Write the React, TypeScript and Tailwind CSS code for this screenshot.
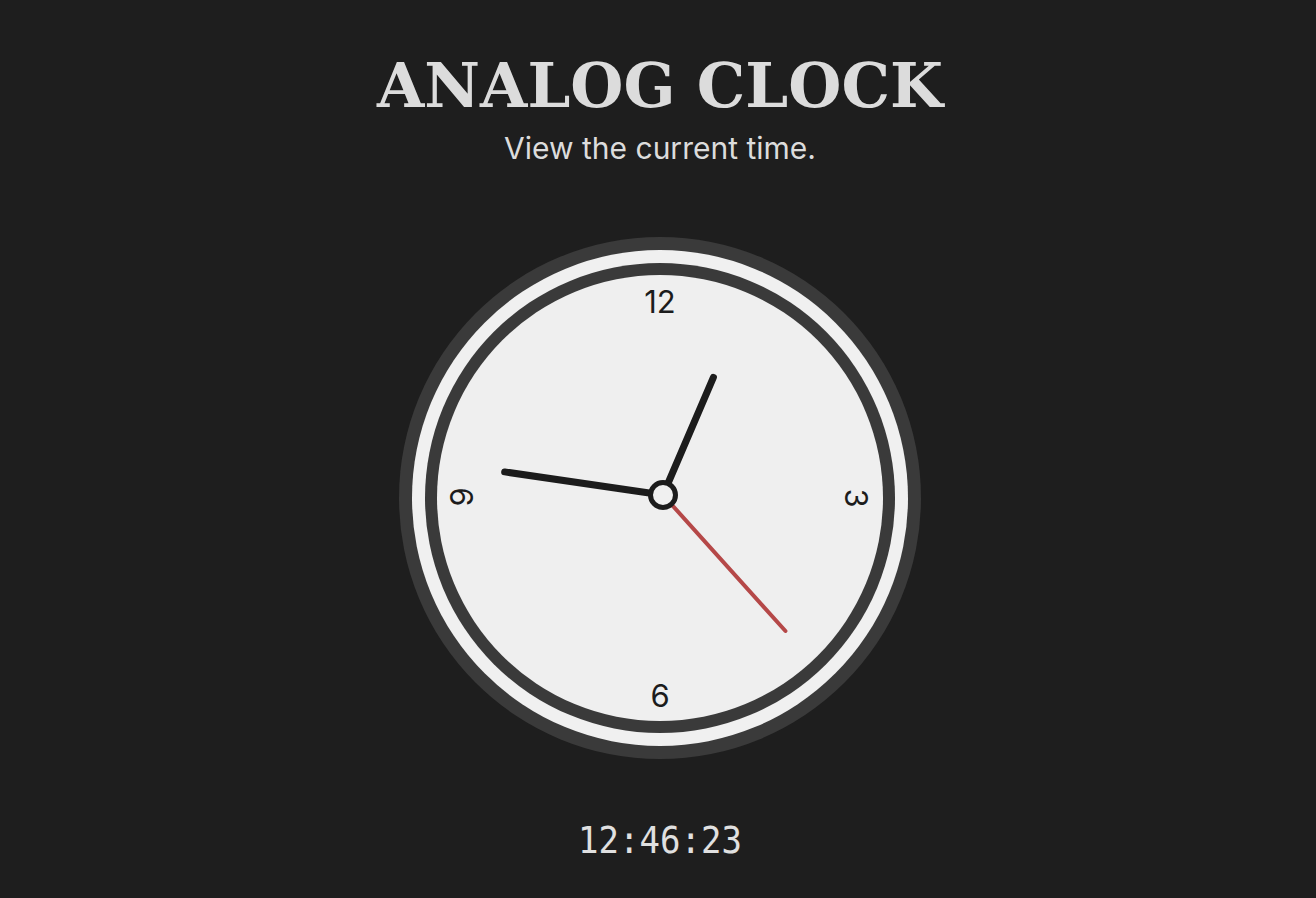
import React from "react"

const PIVOT = { x: 264, y: 258 }

function tip(angle: number, length: number) {
    const rad = (angle * Math.PI) / 180
    return {
        x: PIVOT.x + length * Math.sin(rad),
        y: PIVOT.y - length * Math.cos(rad),
    }
}

function ClockHands() {
    // fixed time 12:46:23
    const h = 12, m = 46, s = 23
    const secAngle = s * 6
    const minAngle = m * 6 + s * 0.1
    const hourAngle = (h % 12) * 30 + m * 0.5 + s * (0.5 / 60)

    const hour = tip(hourAngle, 128)
    const minute = tip(minAngle, 160)
    const second = tip(secAngle, 183)

    return (
        <svg className="absolute inset-0" width="522" height="522" viewBox="0 0 522 522">
            <line x1={PIVOT.x} y1={PIVOT.y} x2={second.x} y2={second.y} stroke="#b54848" strokeWidth="4" strokeLinecap="round" />
            <line x1={PIVOT.x} y1={PIVOT.y} x2={minute.x} y2={minute.y} stroke="#1c1c1c" strokeWidth="7" strokeLinecap="round" />
            <line x1={PIVOT.x} y1={PIVOT.y} x2={hour.x} y2={hour.y} stroke="#1c1c1c" strokeWidth="7" strokeLinecap="round" />
            <circle cx={PIVOT.x} cy={PIVOT.y} r="12.5" fill="#f0f0f0" stroke="#1c1c1c" strokeWidth="5" />
        </svg>
    )
}

export default function App() {
    return (
        <div className="min-h-screen bg-[#1e1e1e] flex flex-col items-center pl-[4px]">
            <h1 className="mt-[55px] text-[61px] leading-none font-bold text-[#dcdcdc] font-['DejaVu_Serif',serif]">
                ANALOG CLOCK
            </h1>
            <p className="mt-[17px] text-[30px] leading-none text-[#dcdcdc] font-['Inter',sans-serif]">
                View the current time.
            </p>

            <div className="relative mt-[74px] w-[522px] h-[522px] rounded-full bg-[#3a3a3a] p-[13px]">
                <div className="w-full h-full rounded-full bg-[#f0f0f0] p-[13px]">
                    <div className="w-full h-full rounded-full bg-[#3a3a3a] p-[12px]">
                        <div className="w-full h-full rounded-full bg-[#efefef]" />
                    </div>
                </div>

                <div className="absolute inset-0 text-[31px] leading-none text-[#1c1c1c] font-['Inter',sans-serif]">
                    <span className="absolute left-[261px] top-[64px] -translate-x-1/2 -translate-y-1/2">12</span>
                    <span className="absolute left-[457px] top-[261px] -translate-x-1/2 -translate-y-1/2 rotate-90">3</span>
                    <span className="absolute left-[261px] top-[458px] -translate-x-1/2 -translate-y-1/2">6</span>
                    <span className="absolute left-[62px] top-[260px] -translate-x-1/2 -translate-y-1/2 -rotate-90">9</span>
                </div>

                <ClockHands />
            </div>

            <div className="mt-[64px] text-[34px] leading-none scale-y-110 text-[#e0e0e0] font-['DejaVu_Sans_Mono',monospace]">
                12:46:23
            </div>
        </div>
    )
}
